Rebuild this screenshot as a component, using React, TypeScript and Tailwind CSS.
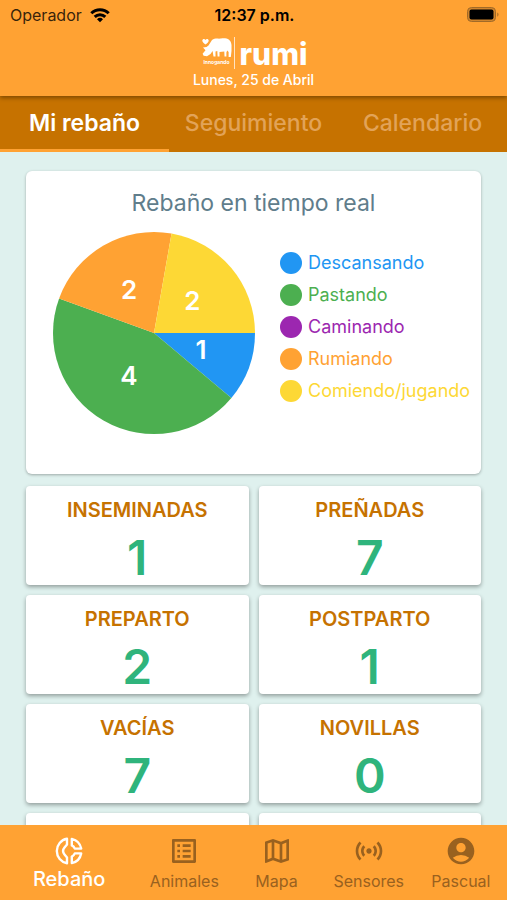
import { MdAccountCircle, MdOutlineListAlt, MdOutlineMap, MdSensors } from 'react-icons/md';

const activities = [
  { label: 'Descansando', value: 1, color: '#2196f3' },
  { label: 'Pastando', value: 4, color: '#4caf50' },
  { label: 'Caminando', value: 0, color: '#9c27b0' },
  { label: 'Rumiando', value: 2, color: '#ffa233' },
  { label: 'Comiendo/jugando', value: 2, color: '#fdd835' },
];

const stats = [
  { label: 'INSEMINADAS', value: 1 },
  { label: 'PREÑADAS', value: 7 },
  { label: 'PREPARTO', value: 2 },
  { label: 'POSTPARTO', value: 1 },
  { label: 'VACÍAS', value: 7 },
  { label: 'NOVILLAS', value: 0 },
];

const tabs = ['Mi rebaño', 'Seguimiento', 'Calendario'];

function DonutIcon({ className }: { className?: string }) {
  return (
    <svg className={className} viewBox="0 0 32 32" fill="none" stroke="currentColor" strokeWidth="2.4" strokeLinejoin="round">
      <path d="M14 3.800A12.400 12.400 0 0 0 14 28.200V22.500L11.500 19.500A5.500 5.500 0 0 1 11.500 12.500L14 9.500Z" />
      <path d="M18.800 3.900A12.400 12.400 0 0 1 28.200 13.600H21.800A6 6 0 0 0 18.800 10.400Z" />
      <path d="M18.800 28.100A12.400 12.400 0 0 0 28.200 18.400H21.800A6 6 0 0 1 18.800 21.600Z" />
    </svg>
  );
}

const navItems = [
  { label: 'Rebaño', icon: DonutIcon },
  { label: 'Animales', icon: MdOutlineListAlt },
  { label: 'Mapa', icon: MdOutlineMap },
  { label: 'Sensores', icon: MdSensors },
  { label: 'Pascual', icon: MdAccountCircle },
];

function StatusBar() {
  return (
    <div className="grid h-[30px] grid-cols-3 items-center pr-2 pl-2.5 text-black">
      <div className="flex items-center gap-2">
        <span className="text-base text-black/80">Operador</span>
        <svg className="h-4 w-5" viewBox="0 0 20 16" fill="none" stroke="currentColor" strokeWidth="3">
          <path d="M1.3 6.2a12.4 12.4 0 0 1 17.4 0" />
          <path d="M4.7 9.8a7.6 7.6 0 0 1 10.6 0" />
          <path d="M10 15.2l-3-3a4.3 4.3 0 0 1 6 0z" fill="currentColor" stroke="none" />
        </svg>
      </div>
      <span className="text-center text-base font-semibold whitespace-nowrap">12:37 p.m.</span>
      <svg className="h-4 w-8 justify-self-end" viewBox="0 0 32 16">
        <rect x="0.5" y="0.5" width="28" height="14" rx="4" fill="#cf842c" stroke="#a06a28" />
        <rect x="2.5" y="2.5" width="24" height="10" rx="2" fill="#000" />
        <path d="M30.3 5.5c1.6.6 1.6 3.6 0 4.2z" fill="#a06a28" />
      </svg>
    </div>
  );
}

function CowLogo() {
  return (
    <svg className="h-[34px] w-9" viewBox="0 0 36 34" fill="#fff">
      <path d="M5.500 7.500C3.500 6.200 2.300 5 2.300 3.600 2.300 1.800 4.800 1.400 5.500 3 6.200 1.400 8.700 1.800 8.700 3.600 8.700 5 7.500 6.200 5.500 7.500Z" />
      <path d="M12 3C15 .8 18 2 21 1.500 27 .8 31 2.500 31.500 8V14L30.800 20H28.600V15L27.200 13.500 26.400 15.500V19.500H24.500L24.300 14.500 19.500 15V19.500H17.600L17.300 14 15.500 14.500V19.500H13.500L12.600 14 10.500 17 7 19.300 3.600 18.800 2.600 16.800 5.500 13.200 3 10.500 6.500 10 8.500 8.500Z" />
      <text x="16.500" y="26.500" textAnchor="middle" fontSize="5" fontWeight="700">Innogando</text>
      <rect x="34" y="0" width="1" height="32" opacity="0.7" />
    </svg>
  );
}

function PieChart() {
  const total = activities.reduce((sum, a) => sum + a.value, 0);
  const point = (fraction: number, radius: number) => {
    const angle = fraction * 2 * Math.PI;
    return [102 + radius * Math.cos(angle), 102 + radius * Math.sin(angle)];
  };
  let start = 0;

  return (
    <svg className="w-[204px] shrink-0" viewBox="0 0 204 204" role="img" aria-label="Rebaño en tiempo real">
      {activities
        .filter((a) => a.value > 0)
        .map((a) => {
          const share = a.value / total;
          const [x1, y1] = point(start, 101);
          const [x2, y2] = point(start + share, 101);
          const [tx, ty] = point(start + share / 2, 50);
          start += share;
          return (
            <g key={a.label}>
              <path d={`M102 102L${x1} ${y1}A101 101 0 0 1 ${x2} ${y2}Z`} fill={a.color} />
              <text x={tx} y={ty + 9} textAnchor="middle" fontSize="26" fontWeight="600" fill="#fff">
                {a.value}
              </text>
            </g>
          );
        })}
    </svg>
  );
}

export default function App() {
  return (
    <div className="flex h-screen flex-col overflow-hidden bg-[#dff1ee] font-['Inter','Liberation_Sans',sans-serif]">
      <header className="z-10 h-24 shrink-0 bg-[#ffa233] shadow-[0_2px_4px_rgba(0,0,0,0.35)]">
        <StatusBar />
        <div className="flex h-[42px] items-center justify-center gap-1 pt-1.5 text-white">
          <CowLogo />
          <span className="text-3xl leading-8 font-extrabold">rumi</span>
        </div>
        <p className="text-center text-sm leading-4 font-medium text-white">Lunes, 25 de Abril</p>
      </header>

      <nav className="grid h-14 shrink-0 grid-cols-3 bg-[#c67200]">
        {tabs.map((tab, i) => (
          <button
            key={tab}
            className={
              i === 0
                ? 'border-b-3 border-[#ffa233] pt-0.5 text-[23px] font-semibold text-white'
                : 'border-b-3 border-transparent pt-0.5 text-[23px] font-medium text-[#e2a358]'
            }
          >
            {tab}
          </button>
        ))}
      </nav>

      <main className="min-h-0 flex-1 overflow-hidden px-[26px] pt-[19px]">
        <section className="mb-3 rounded-md bg-white pt-4 pb-[39px] shadow-[0_1px_3px_rgba(0,0,0,0.3)]">
          <h2 className="text-center text-[23px] leading-8 text-[#607d8b]">Rebaño en tiempo real</h2>
          <div className="flex items-start gap-6 pt-3 pl-[26px]">
            <PieChart />
            <ul className="flex flex-col gap-2 pt-5">
              {activities.map((a) => (
                <li key={a.label} className="flex h-6 items-center gap-1.5 text-lg" style={{ color: a.color }}>
                  <span className="size-[22px] rounded-full bg-current" />
                  {a.label}
                </li>
              ))}
            </ul>
          </div>
        </section>

        <div className="grid grid-cols-2 gap-2.5">
          {stats.map((stat) => (
            <section
              key={stat.label}
              className="h-[99px] rounded-sm bg-white pt-3 text-center shadow-[0_2px_4px_rgba(0,0,0,0.35)]"
            >
              <h3 className="text-xl leading-6 font-semibold text-[#c67200]">{stat.label}</h3>
              <p className="pt-3 text-5xl leading-12 font-semibold text-[#2fb47c]">{stat.value}</p>
            </section>
          ))}
          <div className="h-[99px] rounded-sm bg-white shadow-[0_2px_4px_rgba(0,0,0,0.35)]" />
          <div className="h-[99px] rounded-sm bg-white shadow-[0_2px_4px_rgba(0,0,0,0.35)]" />
        </div>
      </main>

      <nav className="z-10 grid h-[75px] shrink-0 grid-cols-[3fr_2fr_2fr_2fr_2fr] bg-[#ffa233]">
        {navItems.map(({ label, icon: Icon }, i) => (
          <button
            key={label}
            className={
              i === 0
                ? 'flex flex-col items-center pt-2.5 text-xl leading-6 font-medium text-white'
                : 'flex flex-col items-center pt-2.5 text-base leading-7 text-[#99611f]'
            }
          >
            <Icon className="size-8" />
            {label}
          </button>
        ))}
      </nav>
    </div>
  );
}
